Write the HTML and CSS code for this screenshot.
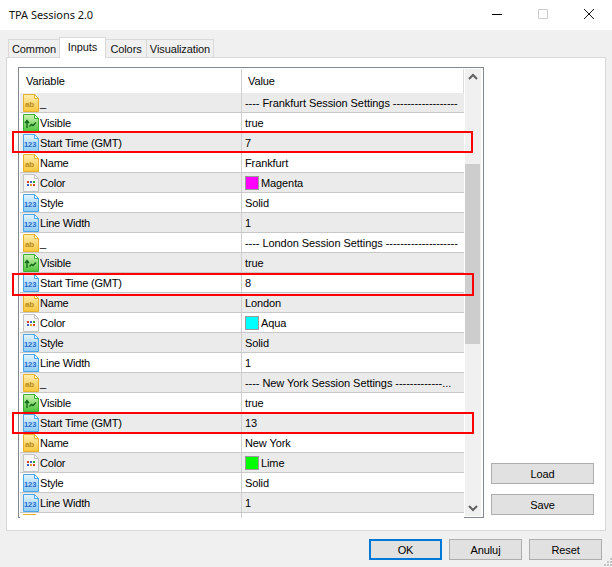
FILE: index.html
```
<!DOCTYPE html>
<html lang="en">
<head>
<meta charset="utf-8">
<title>TPA Sessions 2.0</title>
<link rel="stylesheet" href="styles.css">
</head>
<body>
<svg class="defs" width="0" height="0" aria-hidden="true">
  <defs>
    <linearGradient id="gy" x1="0" y1="0" x2="0" y2="1"><stop offset="0" stop-color="#ffeeb0"/><stop offset="1" stop-color="#f8c63c"/></linearGradient>
    <linearGradient id="gb" x1="0" y1="0" x2="0" y2="1"><stop offset="0" stop-color="#e4f3fe"/><stop offset="1" stop-color="#8ccbf8"/></linearGradient>
    <linearGradient id="gg" x1="0" y1="0" x2="0" y2="1"><stop offset="0" stop-color="#d0f4b4"/><stop offset="1" stop-color="#4cc43c"/></linearGradient>
    <symbol id="i-ab" viewBox="0 0 16 18">
      <path d="M.5.5h11l4 4v13H.5z" fill="url(#gy)" stroke="#e6b22a"/>
      <path d="M11.5.5v4h4z" fill="#fff" stroke="#e6b22a"/>
      <text x="2" y="12.5" class="ic-t ic-ab">ab</text>
    </symbol>
    <symbol id="i-123" viewBox="0 0 16 18">
      <path d="M.5.5h11l4 4v13H.5z" fill="url(#gb)" stroke="#4aa6ea"/>
      <path d="M11.5.5v4h4z" fill="#fff" stroke="#4aa6ea"/>
      <text x="1" y="13" class="ic-t ic-123">123</text>
    </symbol>
    <symbol id="i-bool" viewBox="0 0 16 18">
      <path d="M.5.5h11l4 4v13H.5z" fill="url(#gg)" stroke="#3cb034"/>
      <path d="M11.5.5v4h4z" fill="#fff" stroke="#3cb034"/>
      <path d="M4 14V7M2 9l2-2.5L6 9" fill="none" stroke="#14661c" stroke-width="1.4"/>
      <path d="M6.500 12.500l2-2 1.500 1 3-3" fill="none" stroke="#14661c" stroke-width="1.4"/>
    </symbol>
    <symbol id="i-color" viewBox="0 0 16 18">
      <path d="M.5.5h11l4 4v13H.5z" fill="#f6f6f6" stroke="#c4c4c4"/>
      <path d="M11.5.5v4h4z" fill="#fff" stroke="#c4c4c4"/>
      <path d="M4 7h2v2H4z" fill="#d8402c"/><path d="M7 7h2v2H7z" fill="#3a62c8"/><path d="M10 7h2v2h-2z" fill="#3aa040"/>
      <path d="M4 10h2v2H4z" fill="#3a62c8"/><path d="M7 10h2v2H7z" fill="#e09a28"/><path d="M10 10h2v2h-2z" fill="#d8402c"/>
    </symbol>
  </defs>
</svg>
<div class="window">
  <header class="titlebar">
    <span class="title">TPA Sessions 2.0</span>
    <div class="caption">
      <svg class="cap" width="46" height="30" viewBox="0 0 46 30"><path d="M18 14.500h10" stroke="#000"/></svg>
      <svg class="cap" width="46" height="30" viewBox="0 0 46 30"><path d="M18.500 9.500h9v9h-9z" fill="none" stroke="#ccc"/></svg>
      <svg class="cap" width="46" height="30" viewBox="0 0 46 30"><path d="M18 9l10 10M28 9L18 19" stroke="#111" fill="none"/></svg>
    </div>
  </header>
  <main class="dialog">
    <nav class="tabs">
      <span class="tab tab-common">Common</span>
      <span class="tab tab-active">Inputs</span>
      <span class="tab tab-colors">Colors</span>
      <span class="tab tab-vis">Visualization</span>
    </nav>
    <section class="panel">
      <div class="list">
        <div class="rows">
          <div class="head"><span class="c1">Variable</span><span class="c2">Value</span></div>
          <div class="row g"><span class="c1"><svg class="ico"><use href="#i-ab"/></svg><span class="nm">_</span></span><span class="c2 sep">---- Frankfurt Session Settings ------------------</span></div>
          <div class="row"><span class="c1"><svg class="ico"><use href="#i-bool"/></svg><span class="nm">Visible</span></span><span class="c2">true</span></div>
          <div class="row g"><span class="c1"><svg class="ico"><use href="#i-123"/></svg><span class="nm">Start Time (GMT)</span></span><span class="c2">7</span><i class="mark mark-1"></i></div>
          <div class="row"><span class="c1"><svg class="ico"><use href="#i-ab"/></svg><span class="nm">Name</span></span><span class="c2">Frankfurt</span></div>
          <div class="row g"><span class="c1"><svg class="ico"><use href="#i-color"/></svg><span class="nm">Color</span></span><span class="c2"><i class="sw magenta"></i>Magenta</span></div>
          <div class="row"><span class="c1"><svg class="ico"><use href="#i-123"/></svg><span class="nm">Style</span></span><span class="c2">Solid</span></div>
          <div class="row g"><span class="c1"><svg class="ico"><use href="#i-123"/></svg><span class="nm">Line Width</span></span><span class="c2">1</span></div>
          <div class="row"><span class="c1"><svg class="ico"><use href="#i-ab"/></svg><span class="nm">_</span></span><span class="c2 sep">---- London Session Settings --------------------</span></div>
          <div class="row g"><span class="c1"><svg class="ico"><use href="#i-bool"/></svg><span class="nm">Visible</span></span><span class="c2">true</span></div>
          <div class="row"><span class="c1"><svg class="ico"><use href="#i-123"/></svg><span class="nm">Start Time (GMT)</span></span><span class="c2">8</span><i class="mark mark-2"></i></div>
          <div class="row g"><span class="c1"><svg class="ico"><use href="#i-ab"/></svg><span class="nm">Name</span></span><span class="c2">London</span></div>
          <div class="row"><span class="c1"><svg class="ico"><use href="#i-color"/></svg><span class="nm">Color</span></span><span class="c2"><i class="sw aqua"></i>Aqua</span></div>
          <div class="row g"><span class="c1"><svg class="ico"><use href="#i-123"/></svg><span class="nm">Style</span></span><span class="c2">Solid</span></div>
          <div class="row"><span class="c1"><svg class="ico"><use href="#i-123"/></svg><span class="nm">Line Width</span></span><span class="c2">1</span></div>
          <div class="row g"><span class="c1"><svg class="ico"><use href="#i-ab"/></svg><span class="nm">_</span></span><span class="c2 sep">---- New York Session Settings -------------...</span></div>
          <div class="row"><span class="c1"><svg class="ico"><use href="#i-bool"/></svg><span class="nm">Visible</span></span><span class="c2">true</span></div>
          <div class="row g"><span class="c1"><svg class="ico"><use href="#i-123"/></svg><span class="nm">Start Time (GMT)</span></span><span class="c2">13</span><i class="mark mark-3"></i></div>
          <div class="row"><span class="c1"><svg class="ico"><use href="#i-ab"/></svg><span class="nm">Name</span></span><span class="c2">New York</span></div>
          <div class="row g"><span class="c1"><svg class="ico"><use href="#i-color"/></svg><span class="nm">Color</span></span><span class="c2"><i class="sw lime"></i>Lime</span></div>
          <div class="row"><span class="c1"><svg class="ico"><use href="#i-123"/></svg><span class="nm">Style</span></span><span class="c2">Solid</span></div>
          <div class="row g"><span class="c1"><svg class="ico"><use href="#i-123"/></svg><span class="nm">Line Width</span></span><span class="c2">1</span></div>
          <div class="row stub"><span class="c1"><i class="stub-top"></i></span><span class="c2"></span></div>
        </div>
        <div class="scrollbar">
          <svg class="arrow" width="16" height="16" viewBox="0 0 16 16"><path d="M4 10l4-4 4 4" fill="none" stroke="#606060" stroke-width="2"/></svg>
          <div class="track"><div class="thumb"></div></div>
          <svg class="arrow" width="16" height="16" viewBox="0 0 16 16"><path d="M4 6l4 4 4-4" fill="none" stroke="#606060" stroke-width="2"/></svg>
        </div>
      </div>
      <aside class="side">
        <button class="btn side-btn">Load</button>
        <button class="btn side-btn">Save</button>
      </aside>
    </section>
    <footer class="footer">
      <button class="btn foot-btn default">OK</button>
      <button class="btn foot-btn">Anuluj</button>
      <button class="btn foot-btn">Reset</button>
    </footer>
  </main>
  <svg class="grip" width="8" height="8" viewBox="0 0 8 8"><path d="M6 0h2v2H6zM3 3h2v2H3zM6 3h2v2H6zM0 6h2v2H0zM3 6h2v2H3zM6 6h2v2H6z" fill="#c4c4c4"/></svg>
</div>
</body>
</html>
```
FILE: styles.css
```
* { box-sizing: border-box; }
html, body { margin: 0; padding: 0; }
body { width: 612px; height: 567px; overflow: hidden; background: #f0f0f0; color: #000; font: 11px/16px "Liberation Sans", Arial, sans-serif; letter-spacing: -0.1px; }
.defs { position: absolute; }
.window { display: flex; flex-direction: column; height: 567px; position: relative; }
.titlebar { height: 30px; background: #fff; display: flex; justify-content: space-between; align-items: center; padding-left: 9px; flex: none; }
.title { font: 11px/16px "Noto Sans", sans-serif; color: #111; letter-spacing: -0.05px; }
.caption { display: flex; }
.cap { display: block; }
.dialog { flex: 1; display: flex; flex-direction: column; padding: 7px 6px 0 6px; min-height: 0; }
.tabs { display: flex; height: 20px; padding-left: 2px; flex: none; align-items: flex-end; position: relative; z-index: 1; }
.tab { height: 18px; border: 1px solid #d9d9d9; border-bottom: 0; margin-left: -1px; text-align: center; background: #f0f0f0; color: #111; line-height: 19px; }
.tab-common { width: 52px; margin-left: 0; }
.tab-active { width: 47px; height: 21px; background: #fff; line-height: 19px; margin-bottom: -1px; }
.tab-colors { width: 42px; }
.tab-vis { width: 68px; }
.panel { height: 474px; flex: none; background: #fff; border: 1px solid #d9d9d9; display: flex; padding: 9px 10px 12px 11px; }
.list { width: 466px; height: 451px; border: 1px solid #828790; display: flex; padding: 1px; flex: none; background: #fff; }
.rows { width: 444px; flex: none; }
.head { height: 24px; display: grid; grid-template-columns: 221px 1fr; align-items: center; border-right: 1px solid #dcdcdc; }
.head .c1 { padding-left: 6px; }
.head .c2 { padding-left: 6px; height: 24px; line-height: 25px; border-left: 1px solid #d0d0d0; }
.row { height: 20px; display: grid; grid-template-columns: 221px 1fr; border-bottom: 1px solid #c8c8c8; position: relative; background: #fff; }
.row.g { background: #ebebeb; }
.c1 { display: flex; align-items: center; white-space: nowrap; overflow: hidden; }
.row .c1 { padding-left: 3px; }
.row .c2 { border-left: 1px solid #d0d0d0; padding-left: 3px; display: flex; align-items: center; white-space: nowrap; overflow: hidden; }
.ico { width: 16px; height: 18px; flex: none; display: block; }
.nm { margin-left: 1px; letter-spacing: -0.2px; }
.sep { letter-spacing: -0.06px; }
.ic-t { font-family: "Liberation Sans", sans-serif; font-weight: 700; }
.ic-ab { font-size: 8px; fill: #b88a1c; }
.ic-123 { font-size: 7.5px; fill: #2468c8; }
.sw { display: block; width: 14px; height: 14px; margin-right: 2px; flex: none; border: 1px solid #9a9a9a; }
.magenta { background: #f0f; }
.aqua { background: #0ff; }
.lime { background: #0f0; }
.mark { position: absolute; left: -8px; width: 461px; border: 2px solid #f00; z-index: 2; }
.mark-1 { top: -2px; height: 22px; }
.mark-2 { top: 0; width: 462px; height: 23px; }
.mark-3 { top: -1px; width: 462px; height: 22px; }
.stub { height: 5px; border: 0; }
.stub-top { display: block; width: 13px; height: 1px; margin-top: 1px; background: #e6b22a; }
.row.stub .c1 { align-items: flex-start; }
.scrollbar { width: 16px; margin-left: 1px; flex: none; display: flex; flex-direction: column; background: #f0f0f0; }
.arrow { display: block; flex: none; }
.track { flex: 1; padding-top: 79px; }
.thumb { height: 180px; width: 15px; background: #cdcdcd; }
.side { flex: 1; display: flex; flex-direction: column; justify-content: flex-end; gap: 10px; padding-left: 7px; padding-bottom: 3px; }
.btn { display: block; border: 1px solid #adadad; background: #e1e1e1; font: 11px/16px "Liberation Sans", sans-serif; letter-spacing: -0.1px; color: #000; padding: 0; }
.side-btn { width: 103px; height: 21px; }
.footer { display: flex; justify-content: flex-end; gap: 7px; padding: 8px 4px 0 0; }
.foot-btn { width: 73px; height: 21px; }
.default { border: 2px solid #0078d7; }
.grip { position: absolute; right: 0; bottom: 1px; }
```
